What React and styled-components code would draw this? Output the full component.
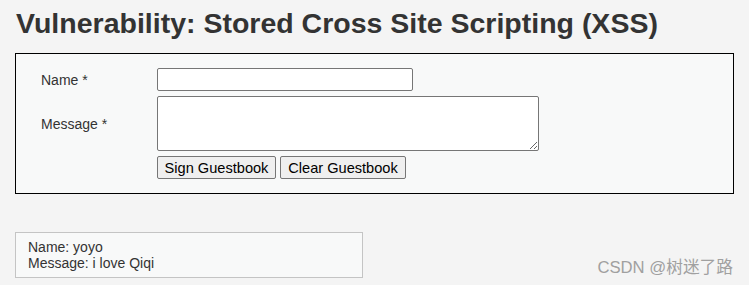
import React from 'react';
import styled, { createGlobalStyle } from 'styled-components';

const GlobalStyle = createGlobalStyle`
  html, body {
    margin: 0;
    padding: 0;
    background: #f4f4f4;
  }
  body {
    font-family: "Liberation Sans", Arial, sans-serif;
    font-size: 14px;
    color: #333;
  }
`;

const Page = styled.div`
  position: relative;
  width: 749px;
  height: 285px;
  padding: 8px 0 0 15px;
  box-sizing: border-box;
  overflow: hidden;
`;

const Title = styled.h1`
  margin: 0 0 14px 1px;
  font-size: 28.5px;
  line-height: 31px;
  font-weight: bold;
  color: #333;
`;

const CodeArea = styled.div`
  width: 719px;
  box-sizing: border-box;
  border: 1px solid #000;
  background: #f8f9f9;
  padding: 14px 0 14px 25px;
`;

const FormGrid = styled.form`
  display: grid;
  grid-template-columns: 116px auto;
  row-gap: 5px;
  align-items: center;
  justify-items: start;
`;

const Label = styled.label`
  font-size: 14px;
  line-height: 16px;
  color: #333;
`;

const TextInput = styled.input`
  width: 256px;
  height: 23px;
  box-sizing: border-box;
  border: 1px solid #767676;
  border-radius: 2px;
  background: #fff;
  padding: 1px 2px;
  margin: 0;
  font: 13px "Liberation Sans", Arial, sans-serif;
`;

const TextArea = styled.textarea`
  display: block;
  width: 382px;
  height: 55px;
  box-sizing: border-box;
  border: 1px solid #767676;
  border-radius: 2px;
  background: #fff;
  margin: 0;
  font: 13px "Liberation Mono", monospace;
`;

const Buttons = styled.div`
  grid-column: 2;
  display: flex;
  gap: 4px;
`;

const Button = styled.button`
  width: ${(props) => props.$width}px;
  height: 23px;
  box-sizing: border-box;
  padding: 1px 0;
  margin: 0;
  border: 1px solid #767676;
  border-radius: 2px;
  background: #efefef;
  color: #000;
  text-align: center;
  font: 14.6px "Liberation Sans", Arial, sans-serif;
`;

const Comments = styled.div`
  margin-top: 38px;
  width: 348px;
  box-sizing: border-box;
  border: 1px solid #c4c4c4;
  background: #f8f9f9;
  padding: 6px 12px;
  font-size: 14px;
  line-height: 16px;
  color: #333;
`;

const Watermark = styled.div`
  position: absolute;
  right: 16px;
  bottom: 7px;
  font-family: "Liberation Sans", "Noto Sans CJK SC", sans-serif;
  font-size: 16.7px;
  line-height: 20px;
  color: #a0a0a0;
`;

export default function App() {
  return (
    <>
      <GlobalStyle />
      <Page>
        <Title>Vulnerability: Stored Cross Site Scripting (XSS)</Title>
        <CodeArea>
          <FormGrid onSubmit={(e) => e.preventDefault()}>
            <Label htmlFor="txtName">Name *</Label>
            <TextInput id="txtName" type="text" />
            <Label htmlFor="mtxMessage">Message *</Label>
            <TextArea id="mtxMessage" />
            <Buttons>
              <Button type="submit" $width={119}>Sign Guestbook</Button>
              <Button type="button" $width={126}>Clear Guestbook</Button>
            </Buttons>
          </FormGrid>
        </CodeArea>
        <Comments>
          Name: yoyo
          <br />
          Message: i love Qiqi
        </Comments>
        <Watermark>CSDN @树迷了路</Watermark>
      </Page>
    </>
  );
}
